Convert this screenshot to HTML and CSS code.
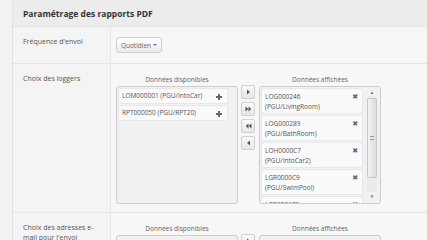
FILE: index.html
```html
<!DOCTYPE html>
<html lang="fr">
<head>
    <meta charset="UTF-8">
    <title>Paramétrage des rapports PDF</title>
    <link rel="stylesheet" href="styles.css">
</head>
<body>
    <div class="panel">
        <div class="panel-head">
            <h2>Paramétrage des rapports PDF</h2>
        </div>

        <!-- fréquence -->
        <div class="row">
            <div class="label">Fréquence d'envoi</div>
            <div class="field field-freq">
                <button class="dropdown">Quotidien <span class="caret"></span></button>
            </div>
        </div>

        <!-- loggers -->
        <div class="row">
            <div class="label">Choix des loggers</div>
            <div class="field">
                <div class="picker">
                    <div class="list-col">
                        <div class="list-title">Données disponibles</div>
                        <div class="list-box list-left">
                            <ul class="list">
                                <li class="item">LOM000001 (PGU/IntoCar) <span class="ico-add"></span></li>
                                <li class="item">RPT000050 (PGU/RPT20) <span class="ico-add"></span></li>
                            </ul>
                        </div>
                    </div>
                    <div class="moves">
                        <button class="move"><svg width="5" height="6" viewBox="0 0 5 6"><path d="M1 0.5 L4 3 L1 5.5 Z" fill="#555"/></svg></button>
                        <button class="move"><svg width="7" height="6" viewBox="0 0 7 6"><path d="M0.5 0.5 L3.3 3 L0.5 5.5 Z M3.5 0.5 L6.3 3 L3.5 5.5 Z" fill="#555"/></svg></button>
                        <button class="move"><svg width="7" height="6" viewBox="0 0 7 6"><path d="M3.5 0.5 L0.7 3 L3.5 5.5 Z M6.5 0.5 L3.7 3 L6.5 5.5 Z" fill="#555"/></svg></button>
                        <button class="move"><svg width="5" height="6" viewBox="0 0 5 6"><path d="M4 0.5 L1 3 L4 5.5 Z" fill="#555"/></svg></button>
                    </div>
                    <div class="list-col">
                        <div class="list-title">Données affichées</div>
                        <div class="list-box list-right">
                            <ul class="list">
                                <li class="item item-two">LOG000246<br>(PGU/LivingRoom) <span class="ico-del">&#x2716;</span></li>
                                <li class="item item-two">LOG000289<br>(PGU/BathRoom) <span class="ico-del">&#x2716;</span></li>
                                <li class="item item-two">LOH0000C7<br>(PGU/IntoCar2) <span class="ico-del">&#x2716;</span></li>
                                <li class="item item-two">LGR0000C9<br>(PGU/SwimPool) <span class="ico-del">&#x2716;</span></li>
                                <li class="item item-two">LGR000175<br>(PGU/Garden) <span class="ico-del">&#x2716;</span></li>
                            </ul>
                            <div class="scrollbar">
                                <span class="sb-arrow">&#x25B4;</span>
                                <div class="sb-track"><div class="sb-thumb"><span class="grip"></span></div></div>
                                <span class="sb-arrow">&#x25BE;</span>
                            </div>
                        </div>
                    </div>
                </div>
            </div>
        </div>

        <!-- adresses -->
        <div class="row">
            <div class="label label-wrap">Choix des adresses e-mail pour l'envoi</div>
            <div class="field">
                <div class="picker">
                    <div class="list-col">
                        <div class="list-title">Données disponibles</div>
                        <div class="list-box list-left"></div>
                    </div>
                    <div class="moves">
                        <button class="move"><svg width="5" height="6" viewBox="0 0 5 6"><path d="M1 0.5 L4 3 L1 5.5 Z" fill="#555"/></svg></button>
                    </div>
                    <div class="list-col">
                        <div class="list-title">Données affichées</div>
                        <div class="list-box list-right"></div>
                    </div>
                </div>
            </div>
        </div>
    </div>
</body>
</html>
```

FILE: styles.css
```css
body {
    margin: 0;
    background-color: #f2f2f2;
    font-family: 'Open Sans', 'Liberation Sans', sans-serif;
    color: #555;
    overflow: hidden;
    height: 240px;
}

.panel {
    margin-left: 12px;
    border-left: 1px solid #e2e2e2;
    background-color: #f7f7f7;
}

.panel-head {
    height: 26px;
    background-color: #ececec;
    border-bottom: 1px solid #e2e2e2;
    display: flex;
    align-items: center;
    padding-left: 10px;
}

h2 {
    margin: 0;
    font-size: 8.5px;
    font-weight: bold;
    color: #333;
}

.row {
    display: flex;
    border-bottom: 1px solid #e6e6e6;
}

.label {
    width: 87px;
    flex: none;
    padding: 10px 0 0 10px;
    font-size: 7px;
    line-height: 10px;
    background-color: #f4f4f4;
    border-right: 1px solid #e8e8e8;
}

.label-wrap {
    width: 74px;
    padding-right: 13px;
}

.field {
    flex: 1;
    padding: 0 0 8px 5px;
}

.field-freq {
    padding: 10px 0 10px 5px;
}

.dropdown {
    width: 46px;
    height: 16px;
    padding: 0;
    border: 1px solid #cfcfcf;
    border-radius: 3px;
    background: linear-gradient(#ffffff, #ebebeb);
    font-family: inherit;
    font-size: 6.5px;
    color: #666;
    display: flex;
    align-items: center;
    justify-content: center;
    gap: 2px;
}

.caret {
    width: 0;
    height: 0;
    border-left: 2.5px solid transparent;
    border-right: 2.5px solid transparent;
    border-top: 2.5px solid #777;
}

.picker {
    display: flex;
    align-items: flex-start;
}

.list-col {
    width: 122px;
}

.list-title {
    font-size: 6.5px;
    line-height: 10px;
    text-align: center;
    padding-top: 11px;
    margin-bottom: 1px;
    color: #666;
}

.list-box {
    height: 116px;
    border: 1px solid #cdcdcd;
    border-radius: 3px;
    background-color: #f1f1f1;
    display: flex;
    overflow: hidden;
}

.list {
    list-style: none;
    margin: 0;
    padding: 1px 0 0 1px;
}

.list-left .list {
    width: 110px;
}

.list-right .list {
    width: 102px;
}

.item {
    position: relative;
    height: 16px;
    margin-bottom: 1px;
    padding-left: 3px;
    box-sizing: border-box;
    background-color: #fafafa;
    border: 1px solid #e8e8e8;
    border-radius: 2px;
    font-size: 6.5px;
    line-height: 14px;
    color: #555;
}

.item-two {
    height: 26px;
    padding-top: 3px;
    line-height: 10px;
}

.ico-add {
    position: absolute;
    right: 5px;
    top: 5px;
    width: 6px;
    height: 6px;
    background:
        linear-gradient(#666, #666) center / 6px 2px no-repeat,
        linear-gradient(#666, #666) center / 2px 6px no-repeat;
}

.ico-del {
    position: absolute;
    right: 4px;
    top: 3px;
    font-size: 7px;
    line-height: 10px;
    color: #666;
    font-family: 'DejaVu Sans', sans-serif;
}

.moves {
    display: flex;
    flex-direction: column;
    gap: 3px;
    margin: 21px 4px 0 3px;
}

.move {
    width: 14px;
    height: 14px;
    padding: 0;
    border: 1px solid #d0d0d0;
    border-radius: 2px;
    background: linear-gradient(#f9f9f9, #e6e6e6);
    display: flex;
    align-items: center;
    justify-content: center;
}

.scrollbar {
    width: 10px;
    margin: 1px 0 0 4px;
    display: flex;
    flex-direction: column;
    align-items: center;
}

.sb-arrow {
    font-size: 5px;
    line-height: 8px;
    color: #666;
    font-family: 'DejaVu Sans', sans-serif;
}

.sb-track {
    width: 10px;
    height: 96px;
    background-color: #eaeaea;
    border-radius: 2px;
}

.sb-thumb {
    height: 80px;
    margin-top: 2px;
    border: 1px solid #c8c8c8;
    border-radius: 2px;
    box-sizing: border-box;
    background: linear-gradient(90deg, #f2f2f2, #dcdcdc);
    display: flex;
    align-items: center;
    justify-content: center;
}

.grip {
    width: 4px;
    height: 4px;
    border-top: 1px solid #999;
    border-bottom: 1px solid #999;
    box-sizing: border-box;
}
```
